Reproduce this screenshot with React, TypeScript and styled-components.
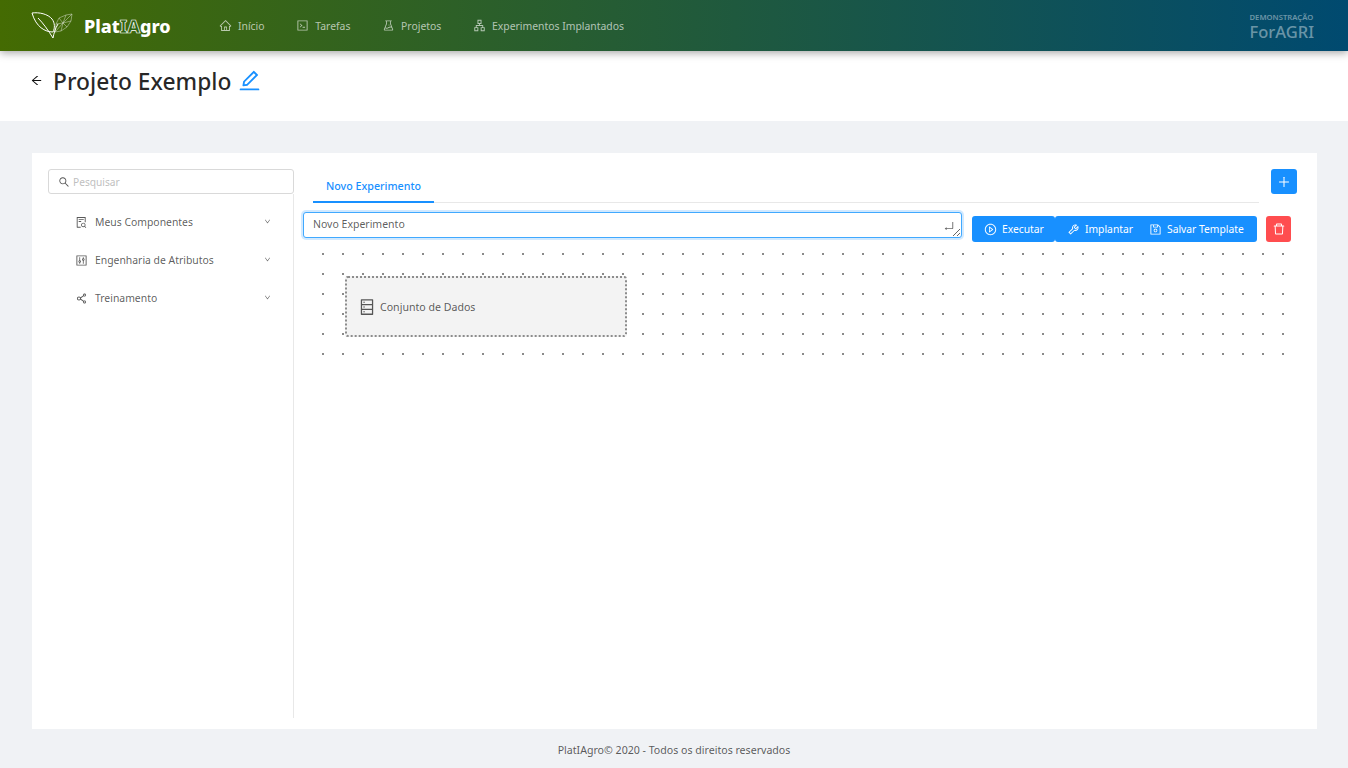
import styled, { createGlobalStyle } from 'styled-components';
import {
  AiOutlineApartment,
  AiOutlineArrowLeft,
  AiOutlineCode,
  AiOutlineControl,
  AiOutlineDatabase,
  AiOutlineDelete,
  AiOutlineDown,
  AiOutlineEdit,
  AiOutlineEnter,
  AiOutlineExperiment,
  AiOutlineFileSearch,
  AiOutlineHome,
  AiOutlinePlayCircle,
  AiOutlinePlus,
  AiOutlineSave,
  AiOutlineSearch,
  AiOutlineShareAlt,
  AiOutlineTool,
} from 'react-icons/ai';

const GlobalStyle = createGlobalStyle`
  html, body {
    margin: 0;
    padding: 0;
    background: #f0f2f5;
  }
  body {
    font-family: "Noto Sans", "Open Sans", "Liberation Sans", sans-serif;
    font-size: 10.5px;
    color: rgba(0, 0, 0, 0.65);
  }
  * { box-sizing: border-box; }
`;

const Page = styled.div`
  width: 1348px;
  height: 768px;
  display: flex;
  flex-direction: column;
  overflow: hidden;
`;

const TopBar = styled.header`
  height: 51px;
  flex: none;
  display: flex;
  align-items: center;
  padding: 0 34px 0 31px;
  background: linear-gradient(90deg, #446b02 0%, #004a70 100%);
  box-shadow: 0 2px 8px rgba(0, 0, 0, 0.35);
  position: relative;
  z-index: 2;
`;

const Brand = styled.div`
  width: 188px;
  display: flex;
  align-items: center;
  gap: 10px;
  flex: none;
`;

const BrandName = styled.span`
  font-size: 18px;
  font-weight: 800;
  color: #fff;
  line-height: 1;
`;

const Hollow = styled.span`
  color: #2f6414;
  -webkit-text-stroke: 0.7px #fff;
`;

const NavList = styled.nav`
  display: flex;
  flex: 1;
  gap: 31.7px;
`;

const NavItem = styled.a`
  display: flex;
  align-items: center;
  gap: 6px;
  color: rgba(255, 255, 255, 0.65);
  font-size: 10.4px;
  text-decoration: none;

  svg { font-size: 13px; }
`;

const Demo = styled.div`
  display: flex;
  flex-direction: column;
  margin-top: 3px;
  color: rgba(255, 255, 255, 0.42);
`;

const DemoLabel = styled.span`
  font-size: 7.7px;
  font-weight: 600;
  line-height: 9px;
`;

const DemoName = styled.span`
  font-size: 16.5px;
  font-weight: 500;
  line-height: 20px;
`;

const TitleBar = styled.div`
  height: 70px;
  flex: none;
  background: #fff;
  display: flex;
  align-items: flex-start;
  padding: 13px 0 0 30px;
`;

const BackIcon = styled(AiOutlineArrowLeft)`
  font-size: 13px;
  margin-top: 10px;
  margin-right: 10px;
  color: #111;
`;

const Title = styled.h1`
  margin: 0;
  font-size: 22.8px;
  font-weight: 500;
  line-height: 35px;
  color: rgba(0, 0, 0, 0.85);
`;

const EditIcon = styled(AiOutlineEdit)`
  font-size: 25px;
  color: #1890ff;
  margin: 4px 0 0 6px;
`;

const Content = styled.main`
  margin: 32px 31px 0 32px;
  background: #fff;
  display: flex;
  height: 576px;
  flex: none;
  padding-bottom: 11px;
`;

const Sider = styled.aside`
  width: 262px;
  flex: none;
  padding: 16px 0 0 16px;
  display: flex;
  flex-direction: column;
`;

const SearchBox = styled.label`
  height: 25px;
  flex: none;
  display: flex;
  align-items: center;
  gap: 3px;
  padding: 0 9px;
  border: 1px solid #d9d9d9;
  border-radius: 3px;
  color: #555;
  background: #fff;

  svg { font-size: 12px; }
`;

const SearchInput = styled.input`
  border: none;
  outline: none;
  padding: 0;
  flex: 1;
  font: inherit;
  font-size: 10.2px;
  &::placeholder { color: #bfbfbf; }
`;

const Menu = styled.ul`
  flex: 1;
  list-style: none;
  margin: 0;
  padding: 9px 0 0;
  border-right: 1px solid #e8e8e8;
`;

const MenuItem = styled.li`
  height: 38px;
  display: flex;
  align-items: center;
  padding: 0 22px 0 27px;
  font-size: 10.4px;

  svg { font-size: 13px; flex: none; }
`;

const MenuLabel = styled.span`
  flex: 1;
  margin-left: 7px;
`;

const Caret = styled(AiOutlineDown)`
  && { font-size: 7px; }
  margin-top: -2px;
`;

const Main = styled.section`
  flex: 1;
  min-width: 0;
  padding: 16px 20px 0 9px;
`;

const TabRow = styled.div`
  display: flex;
  align-items: flex-start;
  gap: 12px;
  padding-left: 10px;
`;

const Tabs = styled.div`
  width: 946px;
  height: 34px;
  border-bottom: 1px solid #e8e8e8;
  display: flex;
`;

const Tab = styled.div`
  height: 34px;
  width: 121px;
  padding-left: 13px;
  line-height: 34px;
  font-size: 10.7px;
  font-weight: 500;
  color: #1890ff;
  border-bottom: 2px solid #1890ff;
`;

const IconButton = styled.button<{ $danger?: boolean }>`
  width: ${p => (p.$danger ? '25px' : '26px')};
  height: ${p => (p.$danger ? '26px' : '25px')};
  border: none;
  border-radius: 3px;
  padding: 0;
  display: flex;
  align-items: center;
  justify-content: center;
  flex: none;
  color: #fff;
  font-size: 14px;
  background: ${p => (p.$danger ? '#ff4d4f' : '#1890ff')};
`;

const ActionRow = styled.div`
  display: flex;
  align-items: flex-start;
  margin-top: 9px;
`;

const NameField = styled.div`
  width: 659px;
  height: 26px;
  position: relative;
  flex: none;
`;

const NameInput = styled.textarea`
  display: block;
  width: 100%;
  height: 100%;
  margin: 0;
  padding: 3px 9px;
  border: 1px solid #40a9ff;
  border-radius: 3px;
  box-shadow: 0 0 0 2px rgba(24, 144, 255, 0.2);
  outline: none;
  font: inherit;
  font-size: 10.5px;
  line-height: 17px;
  color: rgba(0, 0, 0, 0.65);
  overflow: hidden;
`;

const EnterMark = styled(AiOutlineEnter)`
  position: absolute;
  right: 7px;
  top: 8px;
  font-size: 12px;
  color: #666;
  pointer-events: none;
`;

const ButtonGroup = styled.div`
  display: flex;
  margin: 4px 9px 0 10px;
  flex: none;
`;

const ActionButton = styled.button<{ $width: number; $radius: string }>`
  width: ${p => p.$width}px;
  height: 26px;
  border: none;
  border-radius: ${p => p.$radius};
  background: #1890ff;
  color: #fff;
  font: inherit;
  font-size: 10.3px;
  padding: 0 0 0 12px;
  display: flex;
  align-items: center;
  gap: 5px;
  white-space: nowrap;

  svg { font-size: 13px; }
`;

const DeleteWrap = styled.div`
  margin-top: 4px;
`;

const Canvas = styled.div`
  position: relative;
  width: 980px;
  height: 120px;
  margin: 2px 0 0 10px;
  background-image: radial-gradient(circle at 10px 10px, #8a8a8a 0.9px, transparent 1.1px);
  background-size: 20px 20px;
`;

const DataNode = styled.div`
  position: absolute;
  left: 32px;
  top: 32px;
  width: 282px;
  height: 61px;
  display: flex;
  align-items: center;
  gap: 4px;
  padding-left: 11px;
  background: #f3f3f3;
  border: 2px dotted #8c8c8c;
  border-radius: 3px;
  font-size: 10.6px;
  color: rgba(0, 0, 0, 0.65);

  svg { font-size: 18px; }
`;

const Footer = styled.footer`
  flex: 1;
  display: flex;
  align-items: center;
  justify-content: center;
  padding-top: 2px;
  font-size: 10.6px;
  color: rgba(0, 0, 0, 0.65);
`;

const BrandMark = () => (
  <svg width="43" height="28" viewBox="0 0 43 28" fill="none" stroke="#fff" strokeWidth="1">
    <path d="M1 1 C8 0 17 2 21 7 C24 11 24 16 22 20 C14 20 5 15 1 1 Z" />
    <path d="M7 6 C12 11 17 18 22 26 C23 21 24 17 27 12" />
    <g strokeWidth="0.5" opacity="0.8">
      <path d="M25 12 L28 6 L35 3 L41 2 L40 9 L36 15 L30 19 L24 20 Z" />
      <path d="M28 6 L32 11 L36 15 M35 3 L32 11 L30 19 M41 2 L32 11 M40 9 L32 11 M25 12 L32 11 M24 20 L32 11" />
    </g>
  </svg>
);

const App = () => {
  return (
    <Page>
      <GlobalStyle />
      <TopBar>
        <Brand>
          <BrandMark />
          <BrandName>
            Plat<Hollow>IA</Hollow>gro
          </BrandName>
        </Brand>
        <NavList>
          <NavItem><AiOutlineHome />Início</NavItem>
          <NavItem><AiOutlineCode />Tarefas</NavItem>
          <NavItem><AiOutlineExperiment />Projetos</NavItem>
          <NavItem><AiOutlineApartment />Experimentos Implantados</NavItem>
        </NavList>
        <Demo>
          <DemoLabel>DEMONSTRAÇÃO</DemoLabel>
          <DemoName>ForAGRI</DemoName>
        </Demo>
      </TopBar>
      <TitleBar>
        <BackIcon />
        <Title>Projeto Exemplo</Title>
        <EditIcon />
      </TitleBar>
      <Content>
        <Sider>
          <SearchBox>
            <AiOutlineSearch />
            <SearchInput placeholder="Pesquisar" />
          </SearchBox>
          <Menu>
            <MenuItem><AiOutlineFileSearch /><MenuLabel>Meus Componentes</MenuLabel><Caret /></MenuItem>
            <MenuItem><AiOutlineControl /><MenuLabel>Engenharia de Atributos</MenuLabel><Caret /></MenuItem>
            <MenuItem><AiOutlineShareAlt /><MenuLabel>Treinamento</MenuLabel><Caret /></MenuItem>
          </Menu>
        </Sider>
        <Main>
          <TabRow>
            <Tabs>
              <Tab>Novo Experimento</Tab>
            </Tabs>
            <IconButton aria-label="Novo"><AiOutlinePlus /></IconButton>
          </TabRow>
          <ActionRow>
            <NameField>
              <NameInput defaultValue="Novo Experimento" />
              <EnterMark />
            </NameField>
            <ButtonGroup>
              <ActionButton $width={83} $radius="3px"><AiOutlinePlayCircle />Executar</ActionButton>
              <ActionButton $width={82} $radius="3px 0 0 3px"><AiOutlineTool />Implantar</ActionButton>
              <ActionButton $width={120} $radius="0 3px 3px 0"><AiOutlineSave />Salvar Template</ActionButton>
            </ButtonGroup>
            <DeleteWrap>
              <IconButton $danger aria-label="Excluir"><AiOutlineDelete /></IconButton>
            </DeleteWrap>
          </ActionRow>
          <Canvas>
            <DataNode>
              <AiOutlineDatabase />
              Conjunto de Dados
            </DataNode>
          </Canvas>
        </Main>
      </Content>
      <Footer>PlatIAgro© 2020 - Todos os direitos reservados</Footer>
    </Page>
  );
};

export default App;
